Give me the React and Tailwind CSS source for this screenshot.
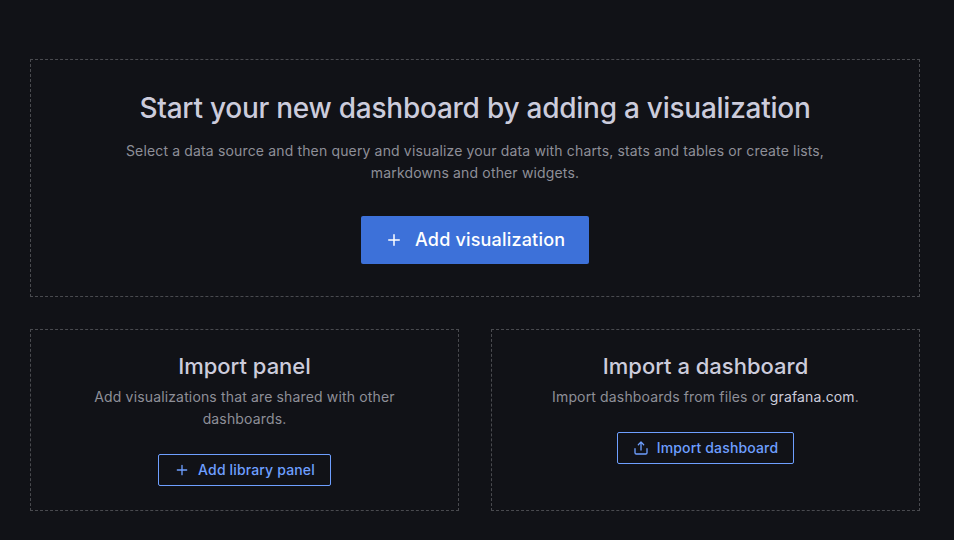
function Plus({ size }) {
  return (
    <svg width={size} height={size} viewBox="0 0 24 24" fill="currentColor" className="shrink-0">
      <path d="M19,11H13V5a1,1,0,0,0-2,0v6H5a1,1,0,0,0,0,2h6v6a1,1,0,0,0,2,0V13h6a1,1,0,0,0,0-2Z" />
    </svg>
  );
}

function Upload() {
  return (
    <svg width="16" height="16" viewBox="0 0 24 24" fill="currentColor" className="shrink-0">
      <path d="M8.71,7.71,11,5.41V15a1,1,0,0,0,2,0V5.41l2.29,2.3a1,1,0,0,0,1.42,0,1,1,0,0,0,0-1.42l-4-4a1,1,0,0,0-.33-.21,1,1,0,0,0-.76,0,1,1,0,0,0-.33.21l-4,4A1,1,0,1,0,8.71,7.71ZM21,12a1,1,0,0,0-1,1v6a1,1,0,0,1-1,1H5a1,1,0,0,1-1-1V13a1,1,0,0,0-2,0v6a3,3,0,0,0,3,3H19a3,3,0,0,0,3-3V13A1,1,0,0,0,21,12Z" />
    </svg>
  );
}

function SmallButton({ icon, children }) {
  return (
    <button className="flex h-8 items-center gap-2 rounded-[2px] border border-[#6e9fff] px-[15px] text-sm font-medium tracking-[0.15px] whitespace-nowrap text-[#6e9fff]">
      {icon}
      <span>{children}</span>
    </button>
  );
}

function Panel({ title, text, children }) {
  return (
    <section className="flex h-[182px] flex-1 flex-col items-center border border-dashed border-[#494a4f] pt-6">
      <h3 className="text-[22px] leading-6 font-medium">{title}</h3>
      <p className="mt-2 mb-6 w-[320px] text-center text-sm leading-[22px] tracking-[0.15px] text-[#8e8f98]">{text}</p>
      {children}
    </section>
  );
}

export default function App() {
  return (
    <main className="flex h-[540px] w-[954px] flex-col gap-8 overflow-hidden bg-[#111217] pt-[59px] pr-[34px] pl-[30px] font-[Inter,sans-serif] text-[#ccccdc]">
      <section className="flex h-[238px] flex-col items-center border border-dashed border-[#494a4f] pt-8">
        <h1 className="text-[28px] leading-8 font-medium tracking-[-0.25px] whitespace-nowrap">Start your new dashboard by adding a visualization</h1>
        <p className="mt-4 w-[710px] text-center text-sm leading-[22px] tracking-[0.15px] text-[#8e8f98]">
          Select a data source and then query and visualize your data with charts, stats and tables or create lists, markdowns and other widgets.
        </p>
        <button className="mt-8 flex h-12 w-[228px] items-center rounded-[2px] bg-[#3d71d9] pl-6 text-lg font-medium tracking-[0.19px] whitespace-nowrap text-white">
          <Plus size={18} />
          <span className="ml-3">Add visualization</span>
        </button>
      </section>
      <div className="flex gap-8">
        <Panel title="Import panel" text="Add visualizations that are shared with other dashboards.">
          <SmallButton icon={<Plus size={16} />}>Add library panel</SmallButton>
        </Panel>
        <Panel title="Import a dashboard" text={<>Import dashboards from files or <a className="text-[#ccccdc]">grafana.com</a>.</>}>
          <SmallButton icon={<Upload />}>Import dashboard</SmallButton>
        </Panel>
      </div>
    </main>
  );
}
